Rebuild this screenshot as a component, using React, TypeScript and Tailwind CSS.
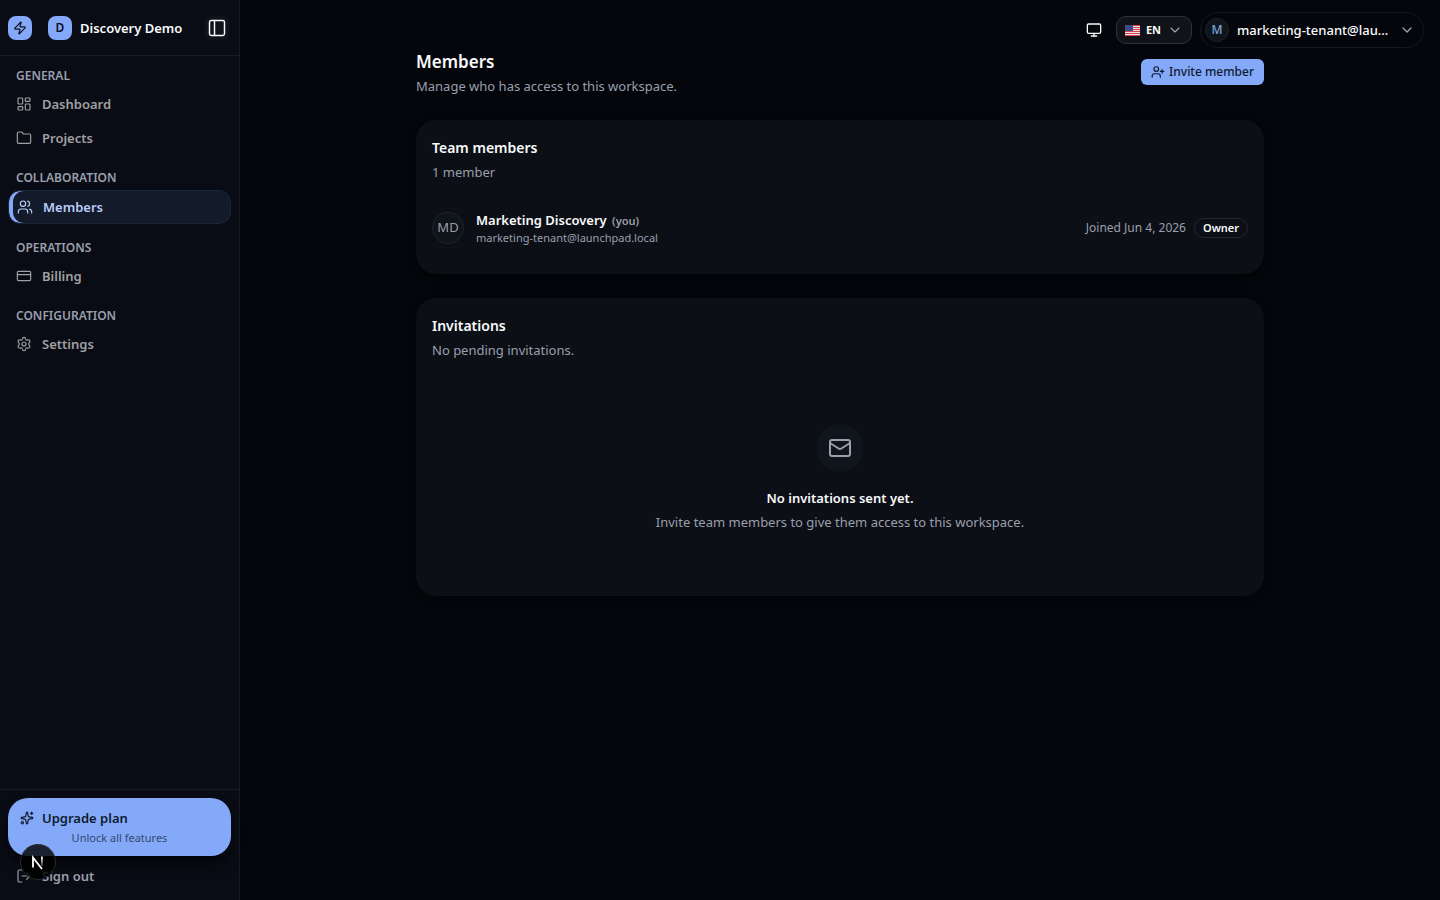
import { useState } from "react";
import {
  ChevronDown,
  CreditCard,
  Folder,
  LayoutDashboard,
  LogOut,
  Mail,
  Monitor,
  PanelLeft,
  Settings,
  Sparkles,
  UserPlus,
  Users,
  Zap,
} from "lucide-react";

const navGroups = [
  {
    label: "General",
    items: [
      { name: "Dashboard", icon: LayoutDashboard },
      { name: "Projects", icon: Folder },
    ],
  },
  { label: "Collaboration", items: [{ name: "Members", icon: Users }] },
  { label: "Operations", items: [{ name: "Billing", icon: CreditCard }] },
  { label: "Configuration", items: [{ name: "Settings", icon: Settings }] },
];

function Sidebar() {
  const [active, setActive] = useState("Members");

  return (
    <aside className="flex w-60 shrink-0 flex-col border-r border-[#171b23] bg-[#090c14]">
      {/* Workspace switcher */}
      <div className="flex h-14 items-center border-b border-[#171b23] px-2">
        <a
          href="#home"
          aria-label="Home"
          className="flex size-6 items-center justify-center rounded-lg bg-[#84a9f8] text-[#0b1020]"
        >
          <Zap className="size-3.5" />
        </a>
        <button
          type="button"
          className="ml-4 flex flex-1 items-center gap-2 text-[13px] leading-5 font-semibold text-gray-50"
        >
          <span className="flex size-6 items-center justify-center rounded-lg bg-[#84a9f8] text-xs text-[#0b1020]">
            D
          </span>
          Discovery Demo
        </button>
        <button
          type="button"
          aria-label="Toggle sidebar"
          className="mr-0.5 flex size-6 items-center justify-center rounded-md bg-[#0f131a] text-gray-50"
        >
          <PanelLeft className="size-5" strokeWidth={1.75} />
        </button>
      </div>

      {/* Navigation */}
      <nav className="flex flex-1 flex-col gap-4 px-2 pt-3">
        {navGroups.map((group) => (
          <div key={group.label}>
            <h2 className="mb-1 px-2 text-xs font-semibold text-[#9a9fac] uppercase">
              {group.label}
            </h2>
            <ul className="flex flex-col gap-0.5">
              {group.items.map(({ name, icon: Icon }) => (
                <li key={name}>
                  <a
                    href={`#${name.toLowerCase()}`}
                    onClick={() => setActive(name)}
                    className={
                      active === name
                        ? "flex items-center gap-2.5 rounded-xl border border-[#1b2436] bg-[#131a29] px-2 py-1.5 text-[13px] leading-5 font-semibold text-[#b9cdfb] shadow-[inset_4px_0_0_#84a9f8]"
                        : "flex items-center gap-2.5 rounded-xl px-2 py-1.5 text-[13px] leading-5 font-semibold text-[#a0a0a2]"
                    }
                  >
                    <Icon className="size-4" strokeWidth={1.75} />
                    {name}
                  </a>
                </li>
              ))}
            </ul>
          </div>
        ))}
      </nav>

      {/* Footer actions */}
      <div className="flex flex-col gap-1 border-t border-[#171b23] p-2">
        <button
          type="button"
          className="rounded-[20px] bg-[#84a9f8] px-3 py-2.5 text-[#0f1a30] shadow-lg shadow-black/50"
        >
          <span className="flex items-center gap-2 text-[13px] leading-5 font-semibold">
            <Sparkles className="size-3.5" />
            Upgrade plan
          </span>
          <span className="mt-0.5 block text-[11px] leading-4 text-[#344771]">
            Unlock all features
          </span>
        </button>
        <button
          type="button"
          className="flex items-center gap-2.5 px-2 py-1.5 text-[13px] leading-5 font-semibold text-[#9a9fac]"
        >
          <LogOut className="size-4" strokeWidth={1.75} />
          Sign out
        </button>
      </div>
    </aside>
  );
}

function UsFlag() {
  return (
    <svg viewBox="0 0 30 22" className="h-[11px] w-[15px]" aria-hidden="true">
      <rect width="30" height="22" fill="#f5dfe1" />
      {[0, 4, 8, 12, 16, 20].map((y) => (
        <rect key={y} y={y} width="30" height="2" fill="#d5424f" />
      ))}
      <rect width="16" height="12" fill="#2f4380" />
      {[2, 6, 10, 14].map((x) =>
        [2, 6, 10].map((y) => (
          <circle key={`${x}-${y}`} cx={x} cy={y} r="0.8" fill="#9aa7cc" />
        )),
      )}
    </svg>
  );
}

function TopBar() {
  return (
    <header className="flex h-12 items-end justify-end gap-2 pr-4">
      <button
        type="button"
        aria-label="Theme"
        className="flex h-9 w-7 items-center justify-center text-gray-50"
      >
        <Monitor className="size-4" />
      </button>
      <div className="flex h-9 items-center">
        <button
          type="button"
          className="flex h-7 items-center gap-1.5 rounded-[10px] border border-[#303237] bg-[#111318] px-2 text-[11px] font-bold text-gray-50"
        >
          <UsFlag />
          EN
          <ChevronDown className="size-4 text-[#9a9fac]" strokeWidth={1.75} />
        </button>
      </div>
      <button
        type="button"
        className="flex h-9 items-center gap-2 rounded-full border border-[#15181e] pr-2 pl-1 text-[13px] leading-5 font-medium text-gray-50"
      >
        <span className="flex size-6 items-center justify-center rounded-full border border-[#1c2229] bg-[#0f151b] text-xs text-[#78a5dc]">
          M
        </span>
        <span className="min-w-[154px] text-left">marketing-tenant@lau...</span>
        <ChevronDown className="size-4 text-[#9a9fac]" />
      </button>
    </header>
  );
}

function Card({
  title,
  description,
  children,
}: {
  title: string;
  description: string;
  children: React.ReactNode;
}) {
  return (
    <section className="rounded-[20px] bg-[#0c0f16] p-4 shadow-[0_2px_8px_rgba(0,0,0,0.6)]">
      <h2 className="text-sm leading-6 font-semibold text-gray-50">{title}</h2>
      <p className="mt-0.5 mb-4 text-[13px] leading-5 text-[#9a9fac]">
        {description}
      </p>
      {children}
    </section>
  );
}

export default function App() {
  return (
    <div className="flex min-h-screen bg-[#04060b] font-['Noto_Sans',sans-serif]">
      <Sidebar />
      <div className="min-w-0 flex-1">
        <TopBar />
        <main className="mx-auto flex max-w-4xl flex-col gap-6 px-6">
          {/* Page heading */}
          <div className="flex items-center justify-between">
            <div>
              <h1 className="text-[17px] leading-7 font-semibold text-gray-50">
                Members
              </h1>
              <p className="text-[13px] leading-5 text-[#9a9fac]">
                Manage who has access to this workspace.
              </p>
            </div>
            <button
              type="button"
              className="flex h-[26px] items-center gap-1 rounded-md bg-[#84a9f8] px-2.5 text-xs font-medium text-[#0f1a30]"
            >
              <UserPlus className="size-3.5" />
              Invite member
            </button>
          </div>

          <Card title="Team members" description="1 member">
            <div className="flex items-center gap-3 py-3">
              <span className="flex size-8 items-center justify-center rounded-full border border-[#20242b] bg-[#0f131a] text-[13px] text-[#9a9fac]">
                MD
              </span>
              <div className="flex-1">
                <p className="text-[13px] leading-5 font-semibold text-gray-50">
                  Marketing Discovery{" "}
                  <span className="ml-0.5 text-[11px] leading-none font-semibold text-[#9a9fac]">
                    (you)
                  </span>
                </p>
                <p className="text-[11px] leading-4 text-[#9a9fac]">
                  marketing-tenant@launchpad.local
                </p>
              </div>
              <div className="flex items-center gap-2 text-[11px] leading-4">
                <span className="text-xs text-[#9a9fac]">
                  Joined Jun 4, 2026
                </span>
                <span className="flex h-5 items-center rounded-full border border-[#24282f] px-2 font-semibold text-gray-50">
                  Owner
                </span>
              </div>
            </div>
          </Card>

          <Card title="Invitations" description="No pending invitations.">
            <div className="flex flex-col items-center py-12 text-center text-[13px] leading-5">
              <span className="mb-4 flex size-12 items-center justify-center rounded-full bg-[#10141b] text-[#9a9fac]">
                <Mail className="size-6" />
              </span>
              <p className="font-semibold text-gray-50">
                No invitations sent yet.
              </p>
              <p className="mt-1 text-[#9a9fac]">
                Invite team members to give them access to this workspace.
              </p>
            </div>
          </Card>
        </main>
      </div>

      {/* Dev tools badge */}
      <button
        type="button"
        aria-label="Open dev tools"
        className="fixed bottom-5 left-5 flex size-9 items-center justify-center rounded-full border border-[#2b2b2b] bg-black/80 text-white"
      >
        <svg viewBox="0 0 16 16" className="size-4" fill="none" aria-hidden="true">
          <defs>
            <linearGradient id="stem" x1="0" y1="3" x2="0" y2="12" gradientUnits="userSpaceOnUse">
              <stop stopColor="#fff" />
              <stop offset="1" stopColor="#fff" stopOpacity="0.2" />
            </linearGradient>
          </defs>
          <path d="M3 13.5V3.5L12 15" stroke="currentColor" strokeWidth="1.8" />
          <path d="M11 2.5h1.8v9.5H11z" fill="url(#stem)" />
        </svg>
      </button>
    </div>
  );
}
